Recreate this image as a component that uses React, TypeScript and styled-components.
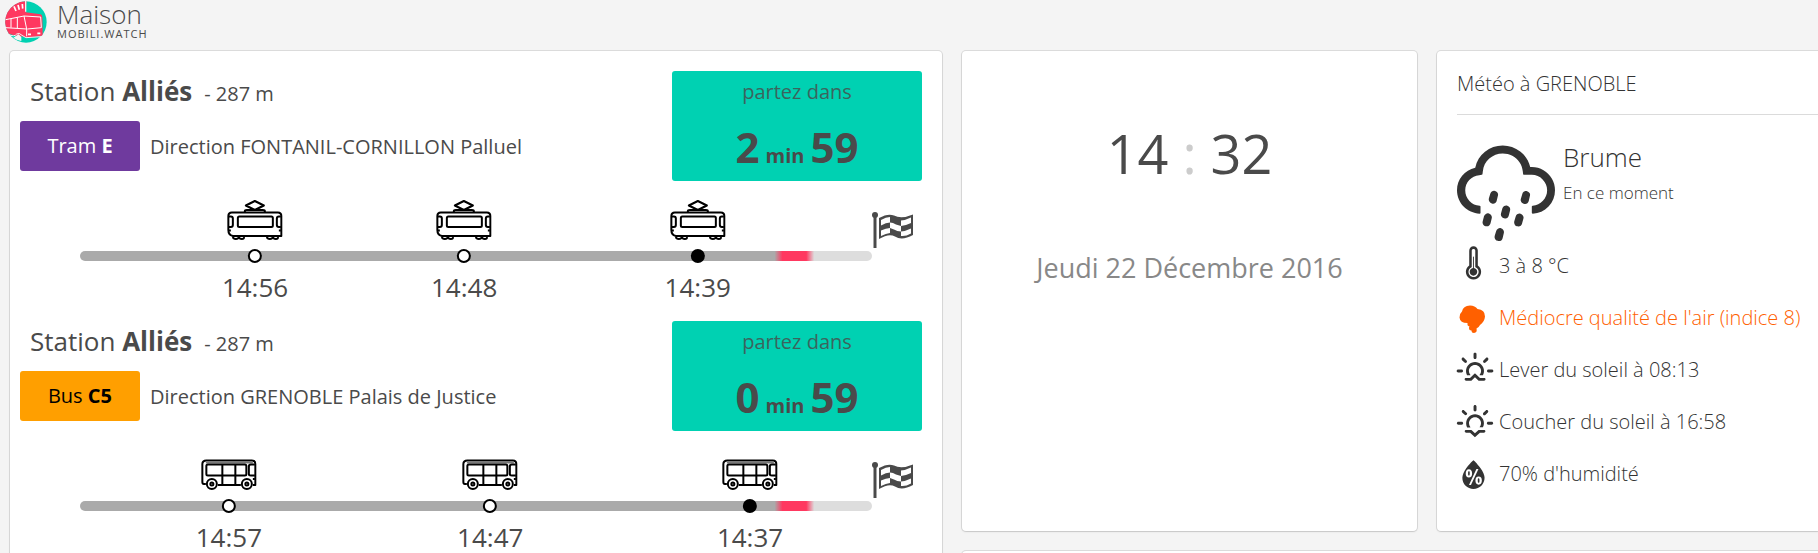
import React from "react";
import styled, { createGlobalStyle } from "styled-components";
import { WiShowers, WiThermometer, WiSunrise, WiSunset, WiHumidity } from "react-icons/wi";

const GlobalStyle = createGlobalStyle`
  *, *::before, *::after { box-sizing: border-box; }
  body {
    margin: 0;
    background: #f4f4f4;
    color: #4a4a4a;
    font-family: "Open Sans", "Noto Sans", sans-serif;
    font-size: 20px;
  }
  h1, h2, h3, p, ul { margin: 0; padding: 0; font-weight: inherit; list-style: none; }
`;

const Page = styled.div`
  height: 100vh;
  overflow: hidden;
  display: flex;
  flex-direction: column;
`;

const Header = styled.header`
  height: 51px;
  flex: none;
  display: flex;
  gap: 10px;
  padding: 1px 0 0 5px;
`;

const Logo = styled.svg`
  width: 42px;
  height: 42px;
  flex: none;
`;

const Brand = styled.div`
  display: flex;
  flex-direction: column;
`;

const PlaceName = styled.h1`
  font-size: 26px;
  line-height: 26px;
  font-weight: 300;
`;

const SiteName = styled.p`
  font-size: 11px;
  line-height: 14px;
  letter-spacing: 1px;
`;

const Dashboard = styled.main`
  display: grid;
  grid-template-columns: minmax(0, 932fr) minmax(0, 455fr) minmax(0, 381fr);
  grid-template-rows: 480px 200px;
  gap: 20px;
  padding-left: 10px;
`;

const Card = styled.section`
  background: #fff;
  border-radius: 4px;
  box-shadow: 0 1px 2px rgba(10, 10, 10, 0.1), 0 0 0 1px rgba(10, 10, 10, 0.1);
`;

const DeparturesCard = styled(Card)`
  grid-row: 1 / span 2;
  padding: 20px 10px;
`;

const Stop = styled.article`
  height: 250px;
`;

const StopHead = styled.div`
  display: flex;
  justify-content: space-between;
  padding-right: 10px;
`;

const StopTitle = styled.h2`
  padding-left: 10px;
  font-size: 26px;
  line-height: 40px;
  margin-bottom: 10px;
  strong { font-weight: 700; }
`;

const Distance = styled.span`
  font-size: 20px;
  line-height: 20px;
  margin-left: 12px;
`;

const Line = styled.div`
  display: flex;
  align-items: center;
  gap: 10px;
  font-size: 20px;
`;

const LineBadge = styled.span<{ $bg: string; $fg: string }>`
  width: 120px;
  line-height: 50px;
  border-radius: 3px;
  text-align: center;
  background: ${(p) => p.$bg};
  color: ${(p) => p.$fg};
`;

const Countdown = styled.div`
  width: 250px;
  height: 110px;
  border-radius: 3px;
  background: #00d1b2;
  text-align: center;
`;

const CountdownLabel = styled.p`
  font-size: 20px;
  line-height: 42px;
  opacity: 0.8;
`;

const CountdownValue = styled.p`
  display: flex;
  justify-content: center;
  align-items: baseline;
  gap: 6px;
  font-size: 42px;
  line-height: 68px;
  font-weight: 700;
  small { font-size: 20px; }
`;

const Timeline = styled.div`
  display: flex;
  padding: 19px 18px 0 60px;
`;

const Axis = styled.div`
  position: relative;
  flex: 1;
  padding-top: 51px;
`;

const Track = styled.div`
  height: 10px;
  border-radius: 5px;
  background: linear-gradient(to right, #aaa 87.7%, #ff3860 88.7%, #ff3860 91.7%, #ddd 92.7%);
`;

const Passage = styled.div`
  position: absolute;
  top: 0;
  transform: translateX(-50%);
  display: flex;
  flex-direction: column;
  align-items: center;
`;

const Dot = styled.span<{ $next: boolean }>`
  width: 14px;
  height: 14px;
  margin-top: 9px;
  border: 2px solid #000;
  border-radius: 50%;
  background: ${(p) => (p.$next ? "#000" : "#fff")};
`;

const PassageTime = styled.time`
  font-size: 26px;
  line-height: 48px;
`;

const Vehicle = styled.svg`
  width: 56px;
  height: 40px;
  fill: none;
  stroke: #000;
  stroke-width: 2;
  stroke-linejoin: round;
`;

const Flag = styled.svg`
  width: 42px;
  height: 36px;
  flex: none;
  margin-top: 12px;
`;

const ClockCard = styled(Card)`
  text-align: center;
  padding-top: 58px;
`;

const Clock = styled.p`
  font-size: 54px;
  line-height: 88px;
  span { color: #ccc; }
`;

const Today = styled.p`
  font-size: 27px;
  line-height: 42px;
  margin-top: 50px;
  color: #888;
`;

const WeatherCard = styled(Card)`
  padding: 10px 0 20px 20px;
  border-radius: 4px 0 0 4px;
  font-weight: 300;
  color: #333;
`;

const WeatherTitle = styled.h2`
  font-size: 20px;
  line-height: 46px;
  padding-bottom: 7px;
  border-bottom: 1px solid #dbdbdb;
`;

const Current = styled.div`
  display: flex;
  gap: 8px;
  height: 124px;
  padding-top: 30px;
`;

const SkyIcon = styled(WiShowers)`
  flex: none;
  width: 98px;
  height: 98px;
  overflow: visible;
`;

const Condition = styled.h3`
  font-size: 26px;
  line-height: 24px;
`;

const Moment = styled.p`
  font-size: 17px;
  line-height: 24px;
  margin-top: 12px;
`;

const Fact = styled.li<{ $alert?: boolean }>`
  display: flex;
  align-items: center;
  height: 52px;
  gap: 6px;
  color: ${(p) => (p.$alert ? "#ff6000" : "inherit")};
  svg {
    flex: none;
    width: 36px;
    height: 36px;
    overflow: visible;
  }
`;

const WideCard = styled(Card)`
  grid-column: 2 / span 2;
  border-radius: 4px 0 0 4px;
`;

function LogoMark() {
  return (
    <Logo viewBox="15 4 126 126" aria-hidden="true">
      <circle cx="78" cy="67" r="62" fill="#00d1b2" />
      <path d="M77 5A62 62 0 0 0 27 103L50 108 78 112Z" fill="#ff3860" />
      <path d="M18 50 76 38 80 5H77V38L122 44Q127 46 127 52L128 104Q128 109 122 109L84 114 72 112 66 54Z" fill="#ff3860" />
      <path d="M77 4V36" stroke="#f4f4f4" strokeWidth="4" />
      <path d="M42 20 48 34M54 16 58 30M67 13 68 27" stroke="#fff" strokeWidth="5" />
      <path d="M17 60 72 49 122 52 124 84 82 88" fill="none" stroke="#fff" strokeWidth="3" />
      <path d="M72 49 80 88 80 110M17 84 80 88M33 57V84M52 53V86" fill="none" stroke="#fff" strokeWidth="3" />
      <path d="M84 104H93M112 101H121" stroke="#fff" strokeWidth="5" />
      <path d="M24 104Q44 113 50 103 58 98 66 107L78 114 124 111" fill="none" stroke="#f4f4f4" strokeWidth="3" />
      <path d="M40 114 56 104 64 112 64 124 50 120Z" fill="#f4f4f4" />
    </Logo>
  );
}

function TramIcon() {
  return (
    <Vehicle viewBox="0 0 56 40" aria-hidden="true">
      <path d="M28 1 37 5.500 28 10 19 5.500Z" />
      <path d="M18 12V11Q18 10 20 10H36Q38 10 38 11V12" />
      <path d="M5 12.500H51Q54.500 12.500 54.500 16V36H6Q1.500 35 1.500 30V16Q1.500 12.500 5 12.500Z" />
      <path d="M2 16.500H4Q6 16.500 6 18.500V25Q6 27 4 27H2" />
      <path d="M54 16.500H52Q50 16.500 50 18.500V25Q50 27 52 27H54" />
      <rect x="11" y="16.500" width="35" height="10.500" rx="1.500" />
      <path d="M2 30.500H4M54 30.500H52" />
      <path d="M6 37Q6.500 39 9 39T12 37Q12.500 39 15 39T17 37M40 37Q40.500 39 43 39T46 37Q46.500 39 49 39T51 37" />
    </Vehicle>
  );
}

function BusIcon() {
  return (
    <Vehicle viewBox="0 0 56 40" aria-hidden="true">
      <path d="M5 34H3Q1.500 34 1.500 32V14Q1.500 10.500 5.500 10.500H51Q54.500 10.500 54.500 14V35H52M17 35H40" />
      <path d="M5 12.500H52" stroke="#777" />
      <rect x="5.500" y="14.500" width="40" height="11" rx="1.500" />
      <path d="M54 14.500H50Q48 14.500 48 16.500V24Q48 25.500 50 25.500H54M54 29H52M21.500 15V35M34.500 15V35" />
      <circle cx="11" cy="34" r="5" />
      <circle cx="11" cy="34" r="1.500" />
      <circle cx="46" cy="34" r="5" />
      <circle cx="46" cy="34" r="1.500" />
    </Vehicle>
  );
}

function FinishFlag() {
  return (
    <Flag viewBox="0 0 42 36" aria-hidden="true">
      <circle cx="3" cy="3" r="3" fill="#4a4a4a" />
      <path d="M1.500 3H4.500V36H1.500Z" fill="#4a4a4a" />
      <path
        d="M7 6Q16 1 22 3.500 29 7.500 41 2.500V23Q30 29 23 24.500 17 21 7 27Z"
        fill="#4a4a4a"
      />
      <path
        d="M9 8Q14 5 18 5V10.500Q14 10.500 9 13.500ZM29 8.500Q34 8 39 5.500V11Q34 13.500 29 14ZM18 10.500Q21 10.500 24 12.500L29 14V19.500Q25 19.500 22 17.500L18 16ZM9 18.500Q14 16 18 16V21Q14 21.500 9 24ZM29 19.500Q34 19 39 16.500V21.500Q34 24.500 29 24Z"
        fill="#fff"
      />
    </Flag>
  );
}

function AirIcon() {
  return (
    <svg viewBox="0 0 36 36" fill="currentColor" aria-hidden="true">
      <path d="M5 12.500Q6 7 13 6.500 18 6.500 20.500 10 28 10.500 28 17.500 27.500 23 23 26 21.500 29 19.500 29.500 20.500 33.500 17 34 14.500 34 14.500 31.500 12 31.500 12 29 12 28 12.500 27.500 10 27 10.500 24 3 24 2.500 18.500 2.500 14.500 5 12.500Z" />
    </svg>
  );
}

type Departure = {
  kind: "tram" | "bus";
  mode: string;
  line: string;
  bg: string;
  fg: string;
  direction: string;
  minutes: number;
  seconds: number;
  passages: { time: string; at: number }[];
};

const departures: Departure[] = [
  {
    kind: "tram", mode: "Tram", line: "E", bg: "#6f3a9e", fg: "#fff",
    direction: "Direction FONTANIL-CORNILLON Palluel", minutes: 2, seconds: 59,
    passages: [{ time: "14:56", at: 22.1 }, { time: "14:48", at: 48.5 }, { time: "14:39", at: 78 }],
  },
  {
    kind: "bus", mode: "Bus", line: "C5", bg: "#ff9f00", fg: "#000",
    direction: "Direction GRENOBLE Palais de Justice", minutes: 0, seconds: 59,
    passages: [{ time: "14:57", at: 18.8 }, { time: "14:47", at: 51.8 }, { time: "14:37", at: 84.6 }],
  },
];

function DepartureBlock({ d }: { d: Departure }) {
  return (
    <Stop>
      <StopHead>
        <div>
          <StopTitle>
            Station <strong>Alliés</strong>
            <Distance>- 287 m</Distance>
          </StopTitle>
          <Line>
            <LineBadge $bg={d.bg} $fg={d.fg}>{d.mode} <strong>{d.line}</strong></LineBadge>
            <span>{d.direction}</span>
          </Line>
        </div>
        <Countdown>
          <CountdownLabel>partez dans</CountdownLabel>
          <CountdownValue>
            <span>{d.minutes}</span>
            <small>min</small>
            <span>{d.seconds}</span>
          </CountdownValue>
        </Countdown>
      </StopHead>
      <Timeline>
        <Axis>
          <Track />
          {d.passages.map((p, i) => (
            <Passage key={p.time} style={{ left: `${p.at}%` }}>
              {d.kind === "tram" ? <TramIcon /> : <BusIcon />}
              <Dot $next={i === d.passages.length - 1} />
              <PassageTime>{p.time}</PassageTime>
            </Passage>
          ))}
        </Axis>
        <FinishFlag />
      </Timeline>
    </Stop>
  );
}

export default function App() {
  return (
    <Page>
      <GlobalStyle />
      <Header>
        <LogoMark />
        <Brand>
          <PlaceName>Maison</PlaceName>
          <SiteName>MOBILI.WATCH</SiteName>
        </Brand>
      </Header>
      <Dashboard>
        <DeparturesCard>
          {departures.map((d) => <DepartureBlock key={d.line} d={d} />)}
        </DeparturesCard>
        <ClockCard>
          <Clock>14 <span>:</span> 32</Clock>
          <Today>Jeudi 22 Décembre 2016</Today>
        </ClockCard>
        <WeatherCard>
          <WeatherTitle>Météo à GRENOBLE</WeatherTitle>
          <Current>
            <SkyIcon viewBox="4.6 7.3 20.8 20.8" />
            <div>
              <Condition>Brume</Condition>
              <Moment>En ce moment</Moment>
            </div>
          </Current>
          <ul>
            <Fact><WiThermometer viewBox="4 3 24 24" />3 à 8 °C</Fact>
            <Fact $alert><AirIcon />Médiocre qualité de l'air (indice 8)</Fact>
            <Fact><WiSunrise viewBox="3 2 24 24" />Lever du soleil à 08:13</Fact>
            <Fact><WiSunset viewBox="3 2 24 24" />Coucher du soleil à 16:58</Fact>
            <Fact><WiHumidity viewBox="4 2 24 24" />70% d'humidité</Fact>
          </ul>
        </WeatherCard>
        <WideCard />
      </Dashboard>
    </Page>
  );
}
